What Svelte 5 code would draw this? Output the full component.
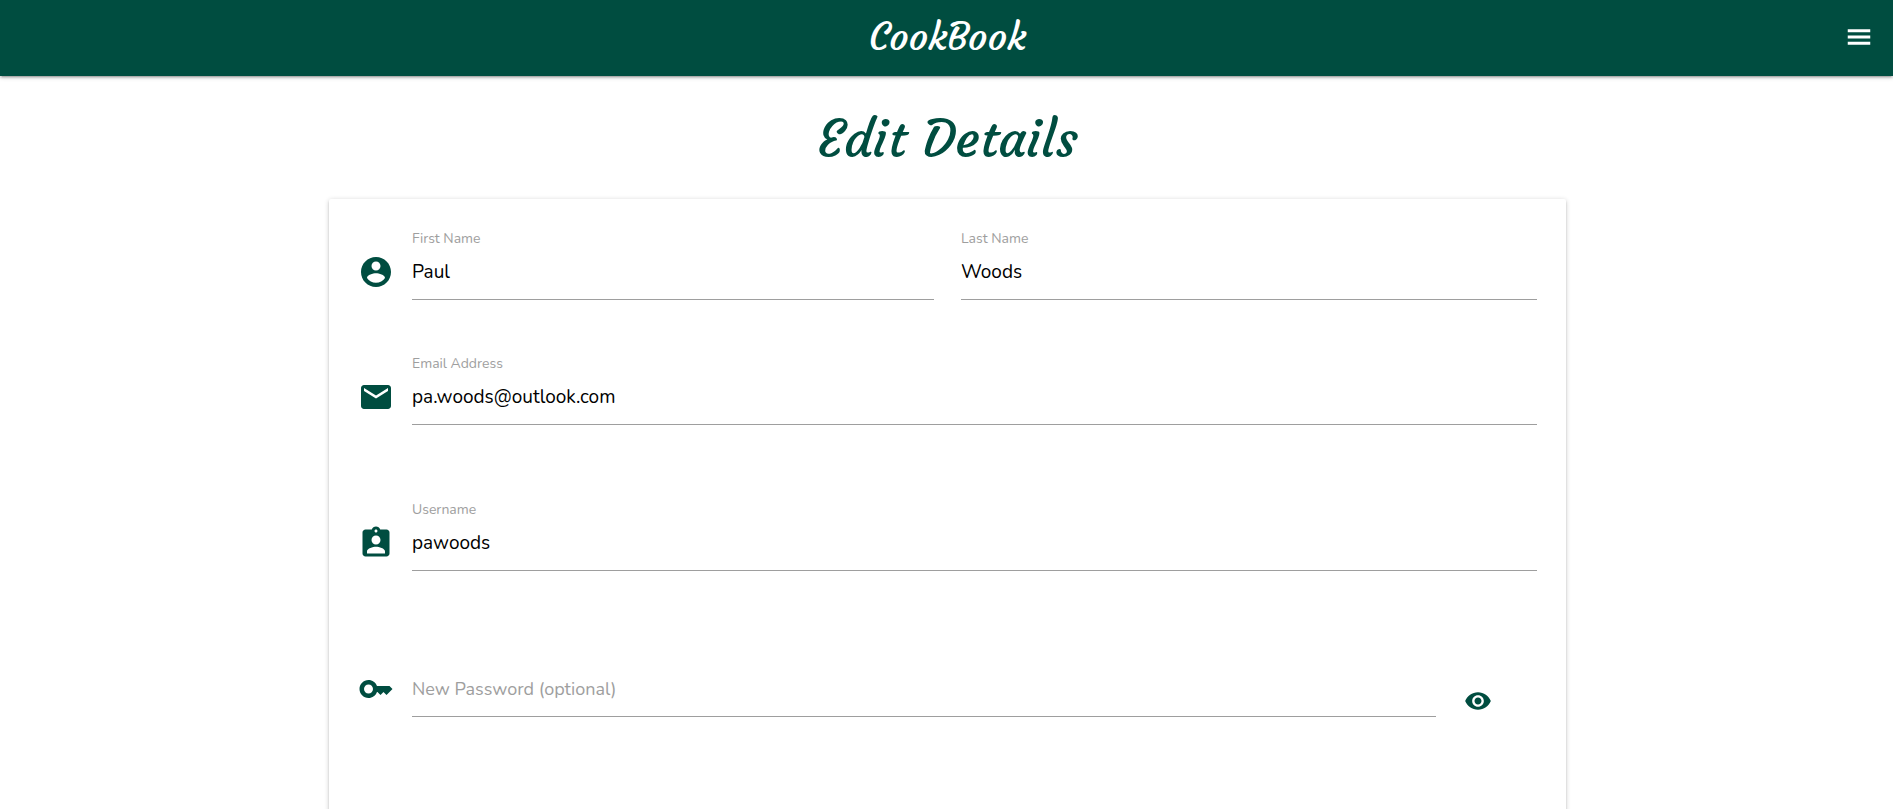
<script>
  let firstName = $state('Paul');
  let lastName = $state('Woods');
  let email = $state('pa.woods@outlook.com');
  let username = $state('pawoods');
  let password = $state('');
  let showPassword = $state(false);

  const icons = {
    person:
      'M12 2C6.48 2 2 6.48 2 12s4.48 10 10 10 10-4.48 10-10S17.52 2 12 2zm0 3c1.66 0 3 1.34 3 3s-1.34 3-3 3-3-1.34-3-3 1.34-3 3-3zm0 14.2c-2.5 0-4.71-1.28-6-3.22.03-1.99 4-3.08 6-3.08 1.99 0 5.97 1.09 6 3.08-1.29 1.94-3.5 3.22-6 3.22z',
    mail: 'M20 4H4c-1.1 0-1.99.9-1.99 2L2 18c0 1.1.9 2 2 2h16c1.1 0 2-.9 2-2V6c0-1.1-.9-2-2-2zm0 4l-8 5-8-5V6l8 5 8-5v2z',
    badge:
      'M19 3h-4.18C14.4 1.84 13.3 1 12 1c-1.3 0-2.4.84-2.82 2H5c-1.1 0-2 .9-2 2v14c0 1.1.9 2 2 2h14c1.1 0 2-.9 2-2V5c0-1.1-.9-2-2-2zm-7 0c.55 0 1 .45 1 1s-.45 1-1 1-1-.45-1-1 .45-1 1-1zm0 4c1.66 0 3 1.34 3 3s-1.34 3-3 3-3-1.34-3-3 1.34-3 3-3zm6 12H6v-1.4c0-2 4-3.1 6-3.1s6 1.1 6 3.1V19z',
    key: 'M21 10h-8.35C11.83 7.67 9.61 6 7 6c-3.31 0-6 2.69-6 6s2.69 6 6 6c2.61 0 4.83-1.67 5.65-4H13l2 2 2-2 2 2 4-4.04L21 10zM7 15c-1.65 0-3-1.35-3-3s1.35-3 3-3 3 1.35 3 3-1.35 3-3 3z',
    eye: 'M12 4.5C7 4.5 2.73 7.61 1 12c1.73 4.39 6 7.5 11 7.5s9.27-3.11 11-7.5c-1.73-4.39-6-7.5-11-7.5zM12 17c-2.76 0-5-2.24-5-5s2.24-5 5-5 5 2.24 5 5-2.24 5-5 5zm0-8c-1.66 0-3 1.34-3 3s1.34 3 3 3 3-1.34 3-3-1.34-3-3-3z',
    menu: 'M3 18.2h18v-2.4H3v2.4zm0-5h18v-2.4H3v2.4zm0-7.4v2.4h18V5.8H3z'
  };
</script>

{#snippet icon(path)}
  <svg class="icon" viewBox="0 0 24 24" aria-hidden="true"><path d={path} /></svg>
{/snippet}

<div class="page">
  <header>
    <a class="brand" href="#home">CookBook</a>
    <button class="menu" type="button" aria-label="Menu">{@render icon(icons.menu)}</button>
  </header>

  <main>
    <h1>Edit Details</h1>
    <form class="card">
      <div class="row names">
        <div class="entry">
          {@render icon(icons.person)}
          <div class="field">
            <label for="first-name">First Name</label>
            <input id="first-name" type="text" bind:value={firstName} />
          </div>
        </div>
        <div class="field">
          <label for="last-name">Last Name</label>
          <input id="last-name" type="text" bind:value={lastName} />
        </div>
      </div>

      <div class="row entry">
        {@render icon(icons.mail)}
        <div class="field">
          <label for="email">Email Address</label>
          <input id="email" type="email" bind:value={email} />
        </div>
      </div>

      <div class="row entry">
        {@render icon(icons.badge)}
        <div class="field">
          <label for="username">Username</label>
          <input id="username" type="text" bind:value={username} />
        </div>
      </div>

      <div class="row entry">
        {@render icon(icons.key)}
        <div class="field" class:resting={!password}>
          <label for="password">New Password (optional)</label>
          <input id="password" type={showPassword ? 'text' : 'password'} bind:value={password} />
        </div>
        <button
          class="reveal"
          type="button"
          aria-label="Show password"
          onclick={() => (showPassword = !showPassword)}>{@render icon(icons.eye)}</button>
      </div>
    </form>
  </main>
</div>

<style>
  :global(body) {
    background: #fff;
  }

  .page {
    display: flex;
    flex-direction: column;
    min-height: 100vh;
    color: #000;
    font-family: Nunito, Lato, sans-serif;
    font-size: 18px;
  }

  header {
    display: grid;
    grid-template-columns: 1fr auto 1fr;
    align-items: center;
    height: 76px;
    box-sizing: border-box;
    padding: 0 19px 2px 21px;
    background: #004d40;
    box-shadow:
      0 2px 2px rgba(0, 0, 0, 0.14),
      0 3px 1px -2px rgba(0, 0, 0, 0.12),
      0 1px 5px rgba(0, 0, 0, 0.2);
  }

  .brand,
  h1 {
    font-family: Courgette, Lato, cursive;
    font-weight: 400;
  }

  .brand {
    grid-column: 2;
    color: #fff;
    font-size: 38px;
    line-height: 48px;
    text-decoration: none;
  }

  button {
    display: flex;
    padding: 0;
    border: 0;
    background: none;
    cursor: pointer;
  }

  .menu {
    justify-self: end;
    color: #fff;
  }

  .icon {
    flex: none;
    width: 36px;
    height: 36px;
    fill: currentColor;
  }

  .menu .icon {
    width: 30px;
    height: 30px;
  }

  main {
    display: flex;
    flex: 1;
    flex-direction: column;
    align-items: center;
    padding-left: 2px;
  }

  h1 {
    margin: 31px 0 28px;
    color: #004d40;
    font-size: 52px;
    line-height: 64px;
  }

  .card {
    flex: 1;
    width: calc(100% - 48px);
    max-width: 1237px;
    box-sizing: border-box;
    padding: 27px 29px;
    border-radius: 2px 2px 0 0;
    background: #fff;
    box-shadow:
      0 2px 2px rgba(0, 0, 0, 0.14),
      0 3px 1px -2px rgba(0, 0, 0, 0.12),
      0 1px 5px rgba(0, 0, 0, 0.2);
  }

  .row {
    margin-bottom: 72px;
  }

  .row.names {
    display: grid;
    grid-template-columns: 1fr 1fr;
    gap: 27px;
    margin-bottom: 51px;
  }

  .entry {
    display: flex;
    gap: 18px;
    color: #004d40;
  }

  .entry > .icon {
    margin-top: 28px;
  }

  .field {
    display: grid;
    flex: 1;
    grid-template-rows: 20px 54px;
    min-width: 0;
  }

  label {
    color: #9e9e9e;
    font-size: 14px;
    line-height: 26px;
  }

  input {
    grid-row: 2;
    grid-column: 1;
    width: 100%;
    box-sizing: border-box;
    padding: 0 0 2px;
    border: 0;
    border-bottom: 1px solid #9e9e9e;
    outline: 0;
    background: transparent;
    color: #000;
    font-family: inherit;
    font-size: 19px;
  }

  input:focus {
    border-bottom-color: #004d40;
  }

  .resting label {
    grid-row: 2;
    grid-column: 1;
    font-size: 18px;
    line-height: 52px;
  }

  .reveal {
    align-self: flex-end;
    margin: 0 45px 2px 10px;
    color: #004d40;
  }

  .reveal .icon {
    width: 28px;
    height: 28px;
  }
</style>
